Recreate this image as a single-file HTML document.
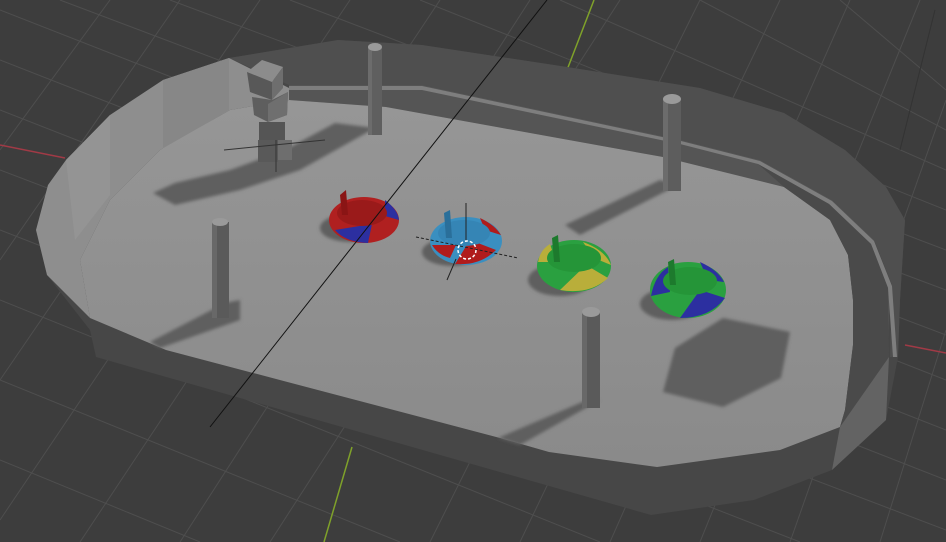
<!DOCTYPE html>
<html><head><meta charset="utf-8"><style>html,body{margin:0;padding:0;background:#3d3d3d;overflow:hidden}svg{display:block}</style></head>
<body>
<svg width="946" height="542" viewBox="0 0 946 542" xmlns="http://www.w3.org/2000/svg">
<defs>
<filter id="b"><feGaussianBlur stdDeviation="1.5"/></filter>
<linearGradient id="fl" x1="0" y1="0" x2="0" y2="1"><stop offset="0" stop-color="#969696"/><stop offset="1" stop-color="#8a8a8a"/></linearGradient>
</defs>
<rect width="946" height="542" fill="#3d3d3d"/>
<g stroke="#4e4e4e" stroke-width="1" fill="none">
<path d="M0,60 L946,430 M0,10 L946,380 M60,0 L946,335 M170,0 L946,290 M290,0 L946,250 M420,0 L946,210 M560,0 L946,170 M700,0 L946,130 M840,0 L946,90 M0,110 L946,480 M0,170 L946,530 M0,230 L800,542 M0,300 L600,542 M0,380 L400,542 M0,460 L200,542"/>
<path d="M0,260 L180,0 M0,380 L260,0 M0,520 L350,0 M80,542 L440,0 M180,542 L530,0 M270,542 L620,0 M430,542 L700,0 M520,542 L780,0 M610,542 L850,0 M700,542 L920,0 M790,542 L946,100 M880,542 L946,330 M0,150 L110,0"/>
</g>
<line x1="0" y1="145" x2="65" y2="158" stroke="#a03a46" stroke-width="1.5"/>
<line x1="905" y1="345" x2="946" y2="353" stroke="#a03a46" stroke-width="1.5"/>
<line x1="567" y1="70" x2="594" y2="0" stroke="#7fa12a" stroke-width="1.5"/>
<line x1="352" y1="447" x2="324" y2="542" stroke="#7fa12a" stroke-width="1.5"/>
<path d="M36,230 L48,185 L66,160 L110,115 L163,80 L229,58 L338,40 L422,45 L567,67 L700,88 L784,113 L845,150 L886,187 L905,220 L900,300 L898,357 L886,420 L832,470 L754,500 L651,515 L96,357 L90,330 L47,275 Z" fill="#474747"/>
<path d="M229,58 L338,40 L422,45 L567,67 L700,88 L784,113 L845,150 L886,187 L905,220 L900,300 L898,357 L890,357 L892,285 L874,240 L832,200 L760,160 L681,140 L422,85 L289,85 Z" fill="#4f4f4f"/>
<path d="M289,85 L422,85 L681,140 L760,160 L832,200 L874,240 L890,285 L888,357 L880,290 L856,240 L784,187 L663,157 L386,107 L289,100 Z" fill="#555555"/>
<path d="M289,86 L422,86 L681,141 L760,161 L832,201 L874,241 L892,286 L897,357 L893,357 L888,288 L871,244 L829,204 L758,164 L680,144 L422,90 L289,90 Z" fill="#7e7e7e"/>
<path d="M36,230 L48,185 L66,160 L110,115 L163,80 L229,58 L289,88 L289,100 L230,110 L160,150 L110,200 L80,260 L90,318 L47,275 Z" fill="#8e8e8e"/>
<path d="M66,160 L110,115 L110,195 L75,240 Z" fill="#949494"/>
<path d="M163,80 L229,58 L229,110 L163,150 Z" fill="#878787"/>
<path d="M289,100 L386,107 L663,157 L784,187 L830,220 L848,255 L853,300 L853,345 L845,410 L840,427 L780,450 L657,467 L549,452 L500,438 L166,350 L90,318 L80,260 L110,200 L160,150 L230,110 Z" fill="url(#fl)"/>
<path d="M784,187 L830,220 L848,255 L853,300 L853,345 L845,410 L840,427 L880,420 L889,357 L888,288 L871,244 L829,204 L758,164 Z" fill="#4a4a4a"/>
<path d="M889,357 L886,420 L832,470 L840,427 Z" fill="#636363"/>
<g fill="#5e5e5e" filter="url(#b)">
<path d="M153,193 L175,183 L230,170 L285,150 L335,123 L375,128 L300,170 L240,190 L175,205 Z"/>
<path d="M565,225 L660,180 L678,185 L580,235 Z"/>
<path d="M225,303 L240,300 L240,320 L160,348 L150,342 Z"/>
<path d="M587,400 L600,400 L520,445 L498,438 Z"/>
<path d="M723,318 L790,332 L781,378 L723,407 L663,392 L675,348 Z"/>
<ellipse cx="350" cy="228" rx="30" ry="14"/><ellipse cx="452" cy="252" rx="30" ry="14"/><ellipse cx="560" cy="280" rx="32" ry="16"/><ellipse cx="672" cy="304" rx="32" ry="16"/>
</g>
<g>
<rect x="368" y="47" width="14" height="88" fill="#5f5f5f"/><rect x="368" y="47" width="4" height="88" fill="#6c6c6c"/><ellipse cx="375" cy="47" rx="7" ry="4" fill="#9a9a9a"/>
<rect x="663" y="99" width="18" height="92" fill="#5d5d5d"/><rect x="663" y="99" width="5" height="92" fill="#6c6c6c"/><ellipse cx="672" cy="99" rx="9" ry="5" fill="#9a9a9a"/>
<rect x="212" y="222" width="17" height="96" fill="#5a5a5a"/><rect x="212" y="222" width="5" height="96" fill="#686868"/><ellipse cx="220" cy="222" rx="8" ry="4" fill="#9a9a9a"/>
<rect x="582" y="312" width="18" height="96" fill="#5a5a5a"/><rect x="582" y="312" width="5" height="96" fill="#686868"/><ellipse cx="591" cy="312" rx="9" ry="5" fill="#9a9a9a"/>
</g>
<path d="M247,72 L262,60 L283,67 L272,82 Z" fill="#8c8c8c"/>
<path d="M247,72 L272,82 L272,100 L250,92 Z" fill="#585858"/>
<path d="M272,82 L283,67 L283,88 L272,100 Z" fill="#6e6e6e"/>
<path d="M252,97 L272,100 L288,92 L287,115 L268,122 L254,115 Z" fill="#5e5e5e"/>
<path d="M268,104 L288,92 L287,115 L268,122 Z" fill="#6f6f6f"/>
<rect x="259" y="122" width="26" height="22" fill="#555"/>
<rect x="258" y="140" width="20" height="22" fill="#595959"/>
<rect x="278" y="140" width="14" height="20" fill="#6e6e6e"/>
<line x1="224" y1="150" x2="325" y2="140" stroke="#333" stroke-width="1"/>
<line x1="276" y1="140" x2="276" y2="172" stroke="#333" stroke-width="1"/>
<g>
<ellipse cx="364" cy="220" rx="35" ry="23" fill="#b02020"/>
<path d="M335,230 Q345,242 368,243 L372,224 Z" fill="#2c2fa0"/>
<path d="M385,200 Q398,210 399,220 L385,216 Z" fill="#2c2fa0"/>
<ellipse cx="362" cy="213" rx="25" ry="13" fill="#9a1a1a"/>
<path d="M340,195 L346,190 L348,215 L342,215 Z" fill="#8a1515"/>
<ellipse cx="466" cy="241" rx="36" ry="24" fill="#3a8fc0"/>
<path d="M455,264 Q480,266 496,250 L470,240 Z" fill="#b01c1c"/>
<path d="M432,245 Q438,255 450,258 L456,245 Z" fill="#b01c1c"/>
<path d="M480,218 Q495,225 501,235 L485,230 Z" fill="#b01c1c"/>
<ellipse cx="464" cy="233" rx="26" ry="13" fill="#3585b5"/>
<path d="M444,213 L450,210 L452,238 L446,238 Z" fill="#2a6f9a"/>
<ellipse cx="574" cy="266" rx="37" ry="26" fill="#2aa040"/>
<path d="M560,290 Q590,295 608,278 L586,265 Z" fill="#b9ae3a"/>
<path d="M538,262 Q540,250 550,244 L556,262 Z" fill="#b9ae3a"/>
<path d="M583,242 Q605,250 611,265 L594,258 Z" fill="#b9ae3a"/>
<ellipse cx="574" cy="258" rx="27" ry="14" fill="#259538"/>
<path d="M552,238 L558,235 L560,262 L554,262 Z" fill="#1d7a2d"/>
<ellipse cx="688" cy="290" rx="38" ry="28" fill="#2aa040"/>
<path d="M680,318 Q710,318 725,298 L700,290 Z" fill="#2c2fa0"/>
<path d="M651,296 Q655,275 668,267 L670,292 Z" fill="#2c2fa0"/>
<path d="M700,262 Q718,270 724,282 L708,280 Z" fill="#2c2fa0"/>
<ellipse cx="690" cy="281" rx="27" ry="14" fill="#259538"/>
<path d="M668,262 L674,259 L676,285 L670,285 Z" fill="#1d7a2d"/>
</g>
<circle cx="467" cy="250" r="9" fill="none" stroke="#fff" stroke-width="1.5" stroke-dasharray="3,2"/>
<line x1="466" y1="203" x2="466" y2="240" stroke="#222"/>
<line x1="456" y1="259" x2="447" y2="280" stroke="#222"/>
<line x1="416" y1="237" x2="518" y2="258" stroke="#222" stroke-dasharray="3,2"/>
<line x1="547" y1="0" x2="210" y2="427" stroke="#111" stroke-width="1"/>
<line x1="900" y1="150" x2="935" y2="10" stroke="#333" stroke-width="1"/>
</svg>
</body></html>
